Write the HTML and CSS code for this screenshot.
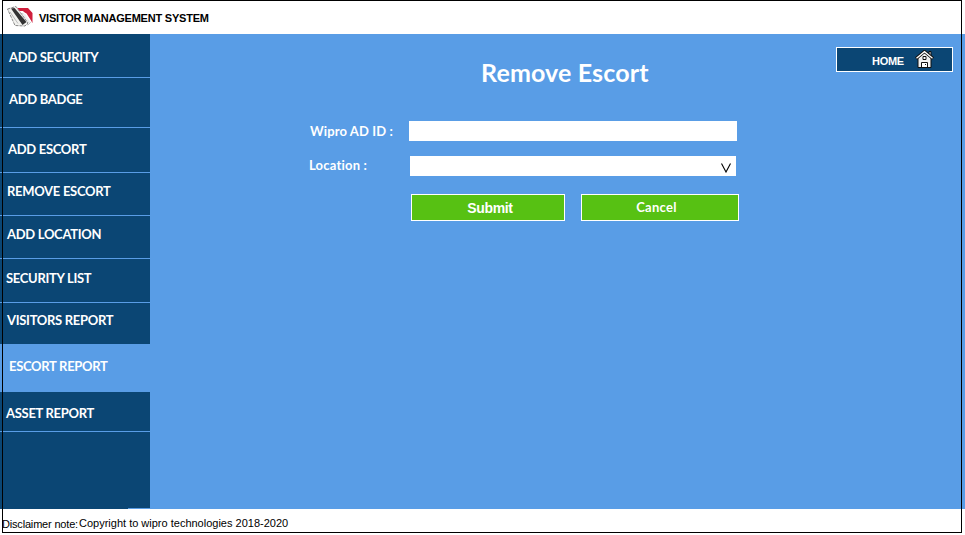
FILE: index.html
```
<!DOCTYPE html>
<html lang="en">
<head>
<meta charset="utf-8">
<title>Visitor Management System</title>
<link rel="stylesheet" href="styles.css">
</head>
<body>
<div class="page">
  <header class="header">
    <svg class="logo" width="28" height="24" viewBox="0 0 28 24">
      <path d="M15 9L20 8L25 17L22 20L17 18Z" fill="#eee" stroke="#aaa" stroke-width=".7"/>
      <path d="M11 3L22 3L26.500 8V18L22 12L17 6H13Z" fill="#d01f3c"/>
      <path d="M16 7L20 9L25 17" stroke="#fff" stroke-width="1.500" fill="none"/>
      <path d="M1.500 4L10 1.500L22 18L19 21L9 20.500Z" fill="#f1f1ee" stroke="#888" stroke-width="1" stroke-dasharray="3 1"/>
      <path d="M5 3.500L8.500 3L20.500 17L16.500 20Z" fill="#333"/>
      <path d="M4 7L12 18.500" stroke="#bbb" stroke-width="1" fill="none"/>
    </svg>
    <h1 class="brand">VISITOR MANAGEMENT SYSTEM</h1>
  </header>
  <div class="body">
    <nav class="menu">
      <a class="item security">ADD SECURITY</a>
      <a class="item badge">ADD BADGE</a>
      <a class="item escort">ADD ESCORT</a>
      <a class="item remove">REMOVE ESCORT</a>
      <a class="item location">ADD LOCATION</a>
      <a class="item list">SECURITY LIST</a>
      <a class="item visitors">VISITORS REPORT</a>
      <a class="item active">ESCORT REPORT</a>
      <a class="item asset">ASSET REPORT</a>
      <div class="rest"></div>
    </nav>
    <main class="main">
      <h2 class="title"><span>Remove Escort</span></h2>
      <form class="form">
        <div class="row"><label class="label">Wipro AD ID :</label><div class="field"></div></div>
        <div class="row row-location"><label class="label">Location :</label><div class="field select">
          <svg width="10" height="10" viewBox="0 0 10 10"><path d="M.5 .5L5 9L9.500 .5" fill="none" stroke="#000" stroke-width="1.100"/></svg></div></div>
        <div class="actions"><button type="button" class="btn submit">Submit</button><button type="button" class="btn cancel">Cancel</button></div>
      </form>
    </main>
    <aside class="side">
      <a class="home"><span>HOME</span>
        <svg width="19" height="19" viewBox="0 0 19 19">
          <path d="M14 1.500H16V7L14 5Z" fill="#ddd" stroke="#111"/>
          <path d="M3 8L9.500 2L16 8V17.500H3Z" fill="#f2f2f2" stroke="#111"/>
          <path d="M1 8.500L9.500 1.500L18 8.500" fill="none" stroke="#111" stroke-width="3"/>
          <path d="M1.500 8.300L9.500 1.700L17.500 8.300" fill="none" stroke="#fff" stroke-width="1.300"/>
          <path d="M8 6.500H11V9.500H8Z" fill="#fff" stroke="#111"/>
          <path d="M6.500 17V12.500H12.500V17" fill="#fff" stroke="#111"/>
          <path d="M10 14.500H11" stroke="#111"/>
        </svg>
      </a>
    </aside>
  </div>
  <footer class="footer"><span class="note">Disclaimer note:</span><span class="copy">Copyright to wipro technologies 2018-2020</span></footer>
  <div class="frame"></div>
</div>
</body>
</html>
```
FILE: styles.css
```
* { box-sizing: border-box; }
body { margin: 0; background: #fff; overflow: hidden; }
.page { position: relative; width: 965px; height: 535px; font-family: "Liberation Sans", Arial, sans-serif; font-variant-ligatures: none; }
.frame { position: absolute; left: 2px; top: 0; width: 960px; height: 533px; border: 1px solid #000; pointer-events: none; }
.header { display: flex; height: 34px; padding: 5px 0 0 6px; }
.logo { flex: none; }
.brand { margin: 5px 0 0 5px; font-size: 11px; line-height: 16px; letter-spacing: -.22px; white-space: nowrap; }
.body { display: flex; height: 475px; background: #599de6; }
.menu { width: 150px; background: #0b4674; display: grid; grid-template-rows: 44px 50px 45px 43px 43px 44px 41px 48px 40px 77px; font: bold 13px/18px Lato, sans-serif; letter-spacing: -.3px; color: #fff; }
.item { border-bottom: 1px solid #599de6; white-space: nowrap; }
.rest { width: 22px; margin-left: 128px; border-bottom: 1px solid #599de6; }
.security { padding: 14px 0 0 9px; }
.badge { padding: 12px 0 0 9px; }
.escort { padding: 12px 0 0 8px; }
.remove { padding: 9px 0 0 7px; }
.location { padding: 9px 0 0 7px; }
.list { padding: 10px 0 0 6px; }
.visitors { padding: 8px 0 0 7px; border-bottom: 0; }
.active { padding: 13px 0 0 9px; background: #599de6; }
.asset { padding: 12px 0 0 6px; }
.main { width: 590px; padding: 23px 0 0 159px; color: #fff; font-family: Lato, sans-serif; }
.title { margin: 0 0 34px 172px; font-size: 25px; line-height: 30px; letter-spacing: .15px; white-space: nowrap; }
.row { display: flex; height: 20px; }
.row-location { margin-top: 15px; }
.label { width: 100px; padding-left: 1px; font-size: 13px; font-weight: bold; line-height: 20px; letter-spacing: .12px; white-space: nowrap; }
.row-location .label { width: 101px; padding-left: 0; line-height: 18px; letter-spacing: .2px; }
.field { width: 328px; height: 20px; background: #fff; }
.select { width: 326px; display: flex; justify-content: flex-end; padding: 7px 5px 0 0; }
.actions { display: flex; gap: 16px; margin: 18px 0 0 102px; }
.btn { height: 27px; padding: 0; border: 1px solid #fff; background: #57c113; color: #fff; font: bold 13px/25px Lato, sans-serif; letter-spacing: .3px; }
.submit { width: 154px; padding: 2px 0 0 4px; font: bold 14px/23px "Liberation Sans", Arial, sans-serif; letter-spacing: -.35px; }
.cancel { width: 158px; padding-right: 7px; }
.side { padding: 13px 0 0 96px; }
.home { display: flex; width: 117px; height: 25px; padding: 2px 0 0 35px; border: 1px solid #fff; background: #0b4674; color: #fff; font-size: 11px; font-weight: bold; line-height: 22px; letter-spacing: -.3px; }
.home span { width: 43px; }
.footer { display: flex; height: 26px; padding-left: 2px; font-size: 11px; white-space: nowrap; color: #000; }
.note { width: 77px; padding-top: 9px; line-height: 13px; letter-spacing: -.18px; }
.copy { padding-top: 8px; line-height: 13px; }
```
